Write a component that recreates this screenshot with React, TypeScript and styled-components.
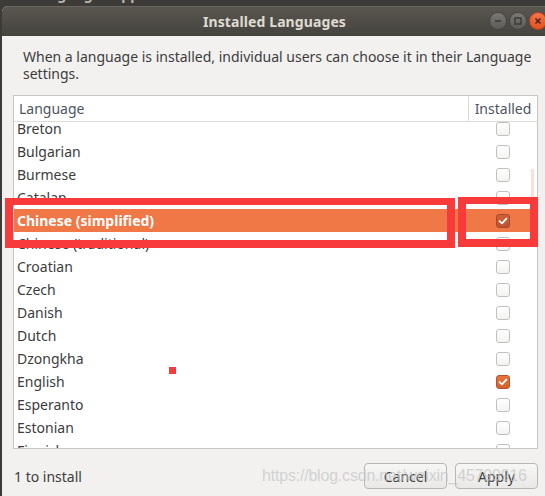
import React from "react";
import styled, { createGlobalStyle } from "styled-components";

const FONT = `"Noto Sans", "Open Sans", sans-serif`;
const RED = "#f83a3a";

const GlobalStyle = createGlobalStyle`
  html, body {
    margin: 0;
    padding: 0;
    width: 545px;
    height: 496px;
    overflow: hidden;
    background: #3c3b37;
  }
  * {
    box-sizing: border-box;
  }
`;

const Desktop = styled.div`
  width: 545px;
  height: 496px;
  overflow: hidden;
  padding-left: 2px;
  background: #3c3b37;
  font-family: ${FONT};
`;

const ParentTitle = styled.div`
  height: 6px;
  overflow: hidden;
  padding-left: 30px;
  span {
    display: block;
    margin-top: -14px;
    font-size: 14px;
    font-weight: 700;
    color: #b9b5ac;
    line-height: 17px;
  }
`;

const Window = styled.div`
  position: relative;
  width: 550px;
  height: 490px;
  background: #f2f1f0;
  border-radius: 6px 6px 0 0;
  overflow: hidden;
`;

const TitleBar = styled.div`
  height: 30px;
  display: grid;
  grid-template-columns: 1fr auto 1fr;
  align-items: center;
  padding: 0 5px 0 0;
  background: linear-gradient(#5a5750, #45433e);
  box-shadow: inset 0 1px 0 #68655e;
`;

const Title = styled.div`
  grid-column: 2;
  font-size: 14px;
  font-weight: 700;
  color: #dfdbd2;
  letter-spacing: 0.1px;
`;

const Controls = styled.div`
  justify-self: end;
  display: flex;
  gap: 2px;
`;

const WinButton = styled.div<{ $close?: boolean }>`
  width: 18px;
  height: 18px;
  border-radius: 50%;
  display: flex;
  align-items: center;
  justify-content: center;
  border: 1px solid ${(p) => (p.$close ? "#b8401c" : "#45443f")};
  background: ${(p) =>
    p.$close
      ? "linear-gradient(#f5744a, #e4521f)"
      : "linear-gradient(#7a7874, #5c5b57)"};
  svg {
    display: block;
  }
`;

const Body = styled.div`
  padding: 12px 0 0 11px;
`;

const Content = styled.div`
  width: 525px;
`;

const Description = styled.p`
  margin: 0 0 13px;
  padding-left: 10px;
  font-size: 14px;
  line-height: 17px;
  color: #3c3c3c;
  white-space: nowrap;
`;

const ListBox = styled.div`
  position: relative;
  background: #fff;
  border: 1px solid #c7c6c3;
`;

const Header = styled.div`
  display: grid;
  grid-template-columns: 1fr 69px;
  height: 26px;
  border-bottom: 1px solid #dcdbd8;
`;

const HeaderCell = styled.div<{ $center?: boolean }>`
  display: flex;
  align-items: center;
  justify-content: ${(p) => (p.$center ? "center" : "flex-start")};
  padding-left: ${(p) => (p.$center ? "0" : "5px")};
  font-size: 14px;
  color: #4e5461;
  & + & {
    border-left: 1px solid #dcdbd8;
  }
`;

const Viewport = styled.div`
  position: relative;
  height: 326px;
  overflow: hidden;
`;

const Rows = styled.div`
  margin-top: -5px;
`;

const Row = styled.div<{ $selected?: boolean }>`
  display: grid;
  grid-template-columns: 1fr 69px;
  height: 23px;
  align-items: center;
  background: ${(p) => (p.$selected ? "#f07746" : "transparent")};
  color: ${(p) => (p.$selected ? "#ffffff" : "#3c3c3c")};
  font-weight: ${(p) => (p.$selected ? 700 : 400)};
  font-size: 14px;
`;

const Name = styled.span`
  padding-left: 3px;
  white-space: nowrap;
`;

const CheckCell = styled.div`
  display: flex;
  justify-content: center;
`;

const Box = styled.span<{ $checked?: boolean; $onSelected?: boolean }>`
  width: 14px;
  height: 14px;
  border-radius: 3px;
  display: flex;
  align-items: center;
  justify-content: center;
  border: 1px solid
    ${(p) => (p.$checked ? (p.$onSelected ? "#a8472a" : "#b5512b") : "#c2c0bd")};
  background: ${(p) =>
    p.$checked
      ? p.$onSelected
        ? "linear-gradient(#cf6138, #bd5430)"
        : "linear-gradient(#e8753f, #d4622f)"
      : "linear-gradient(#ffffff, #f3f3f2)"};
`;

const ScrollIndicator = styled.div`
  position: absolute;
  top: 47px;
  right: 3px;
  width: 3px;
  height: 32px;
  background: #f8e2d8;
`;

const Footer = styled.div`
  display: flex;
  align-items: center;
  justify-content: space-between;
  margin-top: 14px;
  padding-left: 1px;
`;

const Status = styled.span`
  font-size: 14px;
  color: #3c3c3c;
`;

const Buttons = styled.div`
  display: flex;
  gap: 8px;
`;

const Button = styled.button`
  width: 83px;
  height: 26px;
  border: 1px solid #b9b7b3;
  border-radius: 4px;
  background: linear-gradient(#f7f7f6, #e9e8e6);
  font-family: ${FONT};
  font-size: 14px;
  color: #3c3c3c;
  padding: 0;
`;

const Watermark = styled.div`
  position: absolute;
  left: 260px;
  top: 461px;
  font-family: "Liberation Sans", Arial, sans-serif;
  font-size: 16px;
  letter-spacing: -0.2px;
  color: rgba(195, 195, 195, 0.7);
  white-space: nowrap;
  pointer-events: none;
`;

const Frame = styled.div`
  position: absolute;
  border: 8px solid ${RED};
  border-top-width: 7px;
  pointer-events: none;
`;

const Dot = styled.div`
  position: absolute;
  left: 167px;
  top: 361px;
  width: 7px;
  height: 7px;
  background: ${RED};
`;

const languages = [
  { name: "Breton" },
  { name: "Bulgarian" },
  { name: "Burmese" },
  { name: "Catalan" },
  { name: "Chinese (simplified)", checked: true, selected: true },
  { name: "Chinese (traditional)" },
  { name: "Croatian" },
  { name: "Czech" },
  { name: "Danish" },
  { name: "Dutch" },
  { name: "Dzongkha" },
  { name: "English", checked: true },
  { name: "Esperanto" },
  { name: "Estonian" },
  { name: "Finnish" },
];

function Check() {
  return (
    <svg width="10" height="10" viewBox="0 0 10 10">
      <path
        d="M1.6 5.2 L4 7.4 L8.4 2.6"
        fill="none"
        stroke="#fff"
        strokeWidth="1.8"
        strokeLinecap="round"
        strokeLinejoin="round"
      />
    </svg>
  );
}

function App() {
  return (
    <Desktop>
      <GlobalStyle />
      <ParentTitle>
        <span>Language Support</span>
      </ParentTitle>
      <Window>
        <TitleBar>
          <Title>Installed Languages</Title>
          <Controls>
            <WinButton>
              <svg width="10" height="10" viewBox="0 0 10 10">
                <path d="M2 5 H8" stroke="#3a3935" strokeWidth="1.6" />
              </svg>
            </WinButton>
            <WinButton>
              <svg width="10" height="10" viewBox="0 0 10 10">
                <rect x="2" y="2" width="6" height="6" fill="none" stroke="#3a3935" strokeWidth="1.4" />
              </svg>
            </WinButton>
            <WinButton $close>
              <svg width="10" height="10" viewBox="0 0 10 10">
                <path d="M2.5 2.5 L7.5 7.5 M7.5 2.5 L2.5 7.5" stroke="#4a2215" strokeWidth="1.5" />
              </svg>
            </WinButton>
          </Controls>
        </TitleBar>
        <Body>
          <Content>
            <Description>
              When a language is installed, individual users can choose it in their Language
              <br />
              settings.
            </Description>
            <ListBox>
              <Header>
                <HeaderCell>Language</HeaderCell>
                <HeaderCell $center>Installed</HeaderCell>
              </Header>
              <Viewport>
                <Rows>
                  {languages.map((lang) => (
                    <Row key={lang.name} $selected={lang.selected}>
                      <Name>{lang.name}</Name>
                      <CheckCell>
                        <Box $checked={lang.checked} $onSelected={lang.selected}>
                          {lang.checked && <Check />}
                        </Box>
                      </CheckCell>
                    </Row>
                  ))}
                </Rows>
                <ScrollIndicator />
              </Viewport>
            </ListBox>
            <Footer>
              <Status>1 to install</Status>
              <Buttons>
                <Button>Cancel</Button>
                <Button>Apply</Button>
              </Buttons>
            </Footer>
          </Content>
        </Body>
        <Watermark>https://blog.csdn.net/weixin_45799916</Watermark>
        <Frame style={{ left: 3, top: 192, width: 450, height: 50 }} />
        <Frame style={{ left: 456, top: 191, width: 80, height: 50 }} />
        <Dot />
      </Window>
    </Desktop>
  );
}

export default App;
